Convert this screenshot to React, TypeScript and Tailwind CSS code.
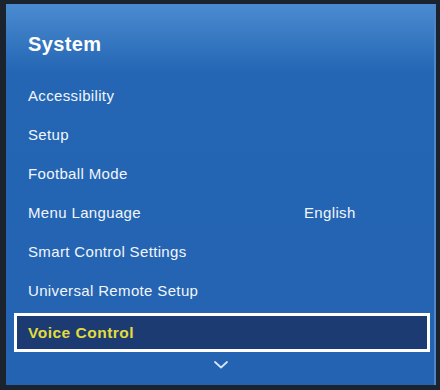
const items = [
  { label: 'Accessibility' },
  { label: 'Setup' },
  { label: 'Football Mode' },
  { label: 'Menu Language', value: 'English' },
  { label: 'Smart Control Settings' },
  { label: 'Universal Remote Setup' },
]

export default function App() {
  return (
    <div
      className="w-[440px] h-[390px] bg-[#1b242e] pl-[6px] pr-[4px] pt-[4px] pb-[5px]"
      style={{ fontFamily: '"Liberation Sans", Arial, sans-serif' }}
    >
      <div className="h-full flex flex-col bg-[#2463b1] border-r-2 border-[#4f86c8] bg-gradient-to-b from-[#4a8bd0] via-[#2466b4] via-[18%] to-[#2463b1]">
        <div className="h-[73px] pl-[22px] pt-[28px]">
          <h1 className="text-[20px] leading-[24px] font-bold text-white tracking-[0.4px]">System</h1>
        </div>
        <ul>
          {items.map(item => (
            <li key={item.label} className="h-[39px] flex items-center pl-[22px] text-[15px] tracking-[0.35px] text-[#f2f6fb]">
              <span className="w-[276px]">{item.label}</span>
              {item.value && <span>{item.value}</span>}
            </li>
          ))}
        </ul>
        <div className="mt-[2px] ml-[8px] mr-[4px] h-[39px] border-[3px] border-white bg-[#1b3b72] flex items-center pl-[11px]">
          <span className="text-[15.5px] font-bold tracking-[0.5px] text-[#e3dc3c]">Voice Control</span>
        </div>
        <div className="flex justify-center pt-[9px] pl-[2px]">
          <svg width="14" height="8" viewBox="0 0 14 8" fill="none">
            <path d="M1 1 L7 6.5 L13 1" stroke="#d6e4f5" strokeWidth="1.8" strokeLinecap="round" strokeLinejoin="round" />
          </svg>
        </div>
      </div>
    </div>
  )
}
